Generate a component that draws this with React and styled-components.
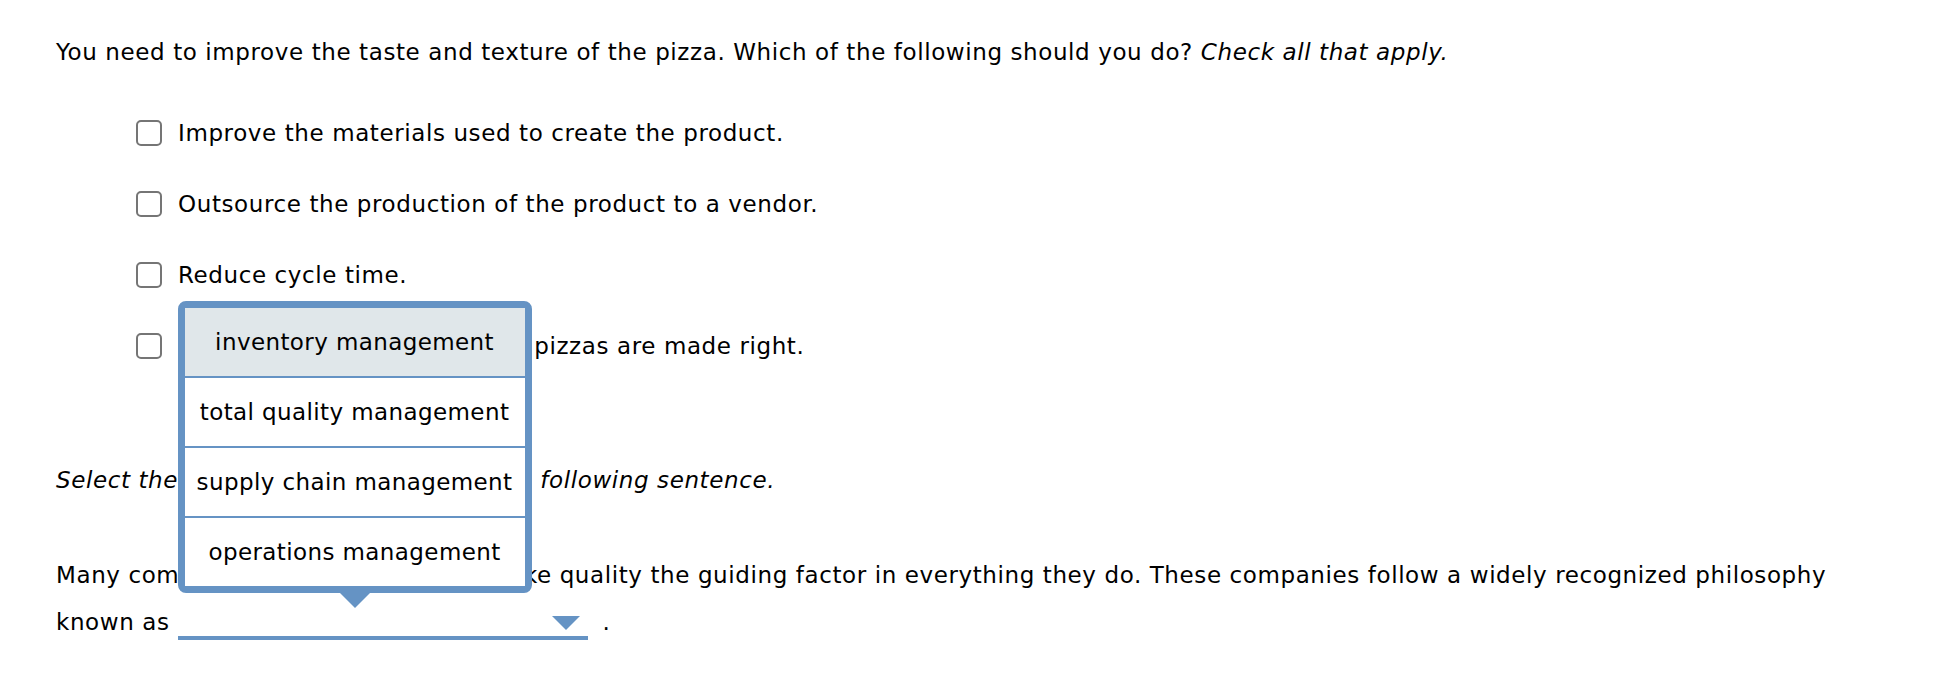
import styled, { createGlobalStyle } from 'styled-components';

const GlobalStyle = createGlobalStyle`
  body {
    margin: 0;
    background: #fff;
    color: #000;
    font-family: 'DejaVu Sans', Verdana, sans-serif;
  }
`;

const SPage = styled.main`
  padding: 37px 56px 0;
  font-size: 23px;
  letter-spacing: 0.6px;
`;

const SQuestion = styled.p`
  margin: 0;
  line-height: 30px;
`;

const SOptions = styled.ul`
  list-style: none;
  margin: 30px 0 0;
  padding: 0 0 0 80px;
`;

const SOption = styled.li`
  display: flex;
  align-items: center;
  gap: 16px;
  height: 71px;
  white-space: nowrap;
`;

const SCheckbox = styled.span`
  flex: none;
  width: 22px;
  height: 22px;
  border: 2px solid #757575;
  border-radius: 5px;
`;

const SInstruction = styled.p`
  margin: 84px 0 0;
  line-height: 30px;
  font-style: italic;
`;

const SSentence = styled.p`
  margin: 57px 0 0;
  line-height: 47px;
`;

const SSelectWrap = styled.span`
  position: relative;
  display: inline-block;
  vertical-align: top;
  width: 410px;
  height: 41px;
  margin: 0 15px 0 8px;
  border-bottom: 4px solid #6593c4;
  box-sizing: border-box;
`;

const SCaret = styled.span`
  position: absolute;
  right: 8px;
  top: 17px;
  width: 0;
  height: 0;
  border-left: 14px solid transparent;
  border-right: 14px solid transparent;
  border-top: 14px solid #6593c4;
`;

const SPopover = styled.div`
  position: absolute;
  left: 0;
  bottom: 43px;
  width: 340px;
  border: 7px solid #6593c4;
  border-radius: 8px;
  background: #fff;
  box-sizing: content-box;
  letter-spacing: 0.4px;

  &::after {
    content: '';
    position: absolute;
    left: 50%;
    bottom: -22px;
    transform: translateX(-50%);
    border-left: 15px solid transparent;
    border-right: 15px solid transparent;
    border-top: 15px solid #6593c4;
  }
`;

const SMenuItem = styled.div`
  height: 68px;
  display: flex;
  align-items: center;
  justify-content: center;
  white-space: nowrap;
  background: ${p => (p.$active ? '#e0e7ea' : '#fff')};
  border-top: ${p => (p.$first ? 'none' : '2px solid #6593c4')};
`;

const options = [
  'Improve the materials used to create the product.',
  'Outsource the production of the product to a vendor.',
  'Reduce cycle time.',
  'Use inspections to ensure all pizzas are made right.',
];

const menu = ['inventory management', 'total quality management', 'supply chain management', 'operations management'];

const App = () => {
  return (
    <SPage>
      <GlobalStyle />
      <SQuestion>
        You need to improve the taste and texture of the pizza. Which of the following should you do?{' '}
        <em>Check all that apply.</em>
      </SQuestion>
      <SOptions>
        {options.map(text => (
          <SOption key={text}>
            <SCheckbox />
            <span>{text}</span>
          </SOption>
        ))}
      </SOptions>
      <SInstruction>Select the best answer to complete the following sentence.</SInstruction>
      <SSentence>
        Many companies such as Domino's make quality the guiding factor in everything they do. These companies follow a
        widely recognized philosophy
        <br />
        known as
        <SSelectWrap>
          <SCaret />
          <SPopover>
            {menu.map((item, i) => (
              <SMenuItem key={item} $first={i === 0} $active={i === 0}>
                {item}
              </SMenuItem>
            ))}
          </SPopover>
        </SSelectWrap>
        .
      </SSentence>
    </SPage>
  );
};

export default App;
